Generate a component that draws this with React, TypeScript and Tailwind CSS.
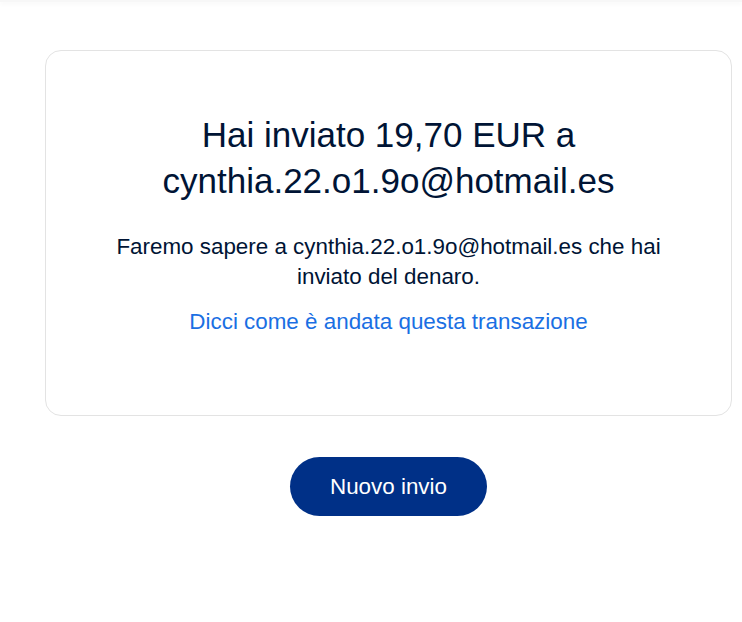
import React from 'react';

export default function App() {
  const email = 'cynthia.22.o1.9o@hotmail.es';

  return (
    <div className="min-h-[622px] w-[742px] bg-white font-['Liberation_Sans',Arial,sans-serif]">
      <div className="h-[2px] bg-[#f7f7f7] shadow-[0_2px_4px_rgba(0,0,0,0.05)]" />
      <div className="ml-[45px] w-[687px] pt-[48px]">
        <div className="rounded-[16px] border border-[#e3e3e3] px-[40px] pt-[61px] pb-[78px] text-center">
          <h1 className="text-[35px] leading-[46px] font-normal text-[#001435]">
            Hai inviato 19,70 EUR a
            <br />
            {email}
          </h1>
          <p className="mx-auto mt-[28px] max-w-[560px] text-[22.4px] leading-[30px] text-[#001435]">
            {`Faremo sapere a ${email} che hai inviato del denaro.`}
          </p>
          <a href="#" className="mt-[15px] block text-[22.4px] leading-[30px] text-[#1a6fe3]">
            Dicci come è andata questa transazione
          </a>
        </div>
        <div className="mt-[41px] flex justify-center">
          <button className="h-[59px] w-[197px] rounded-full bg-[#003087] text-[22.4px] text-white">
            Nuovo invio
          </button>
        </div>
      </div>
    </div>
  );
}
